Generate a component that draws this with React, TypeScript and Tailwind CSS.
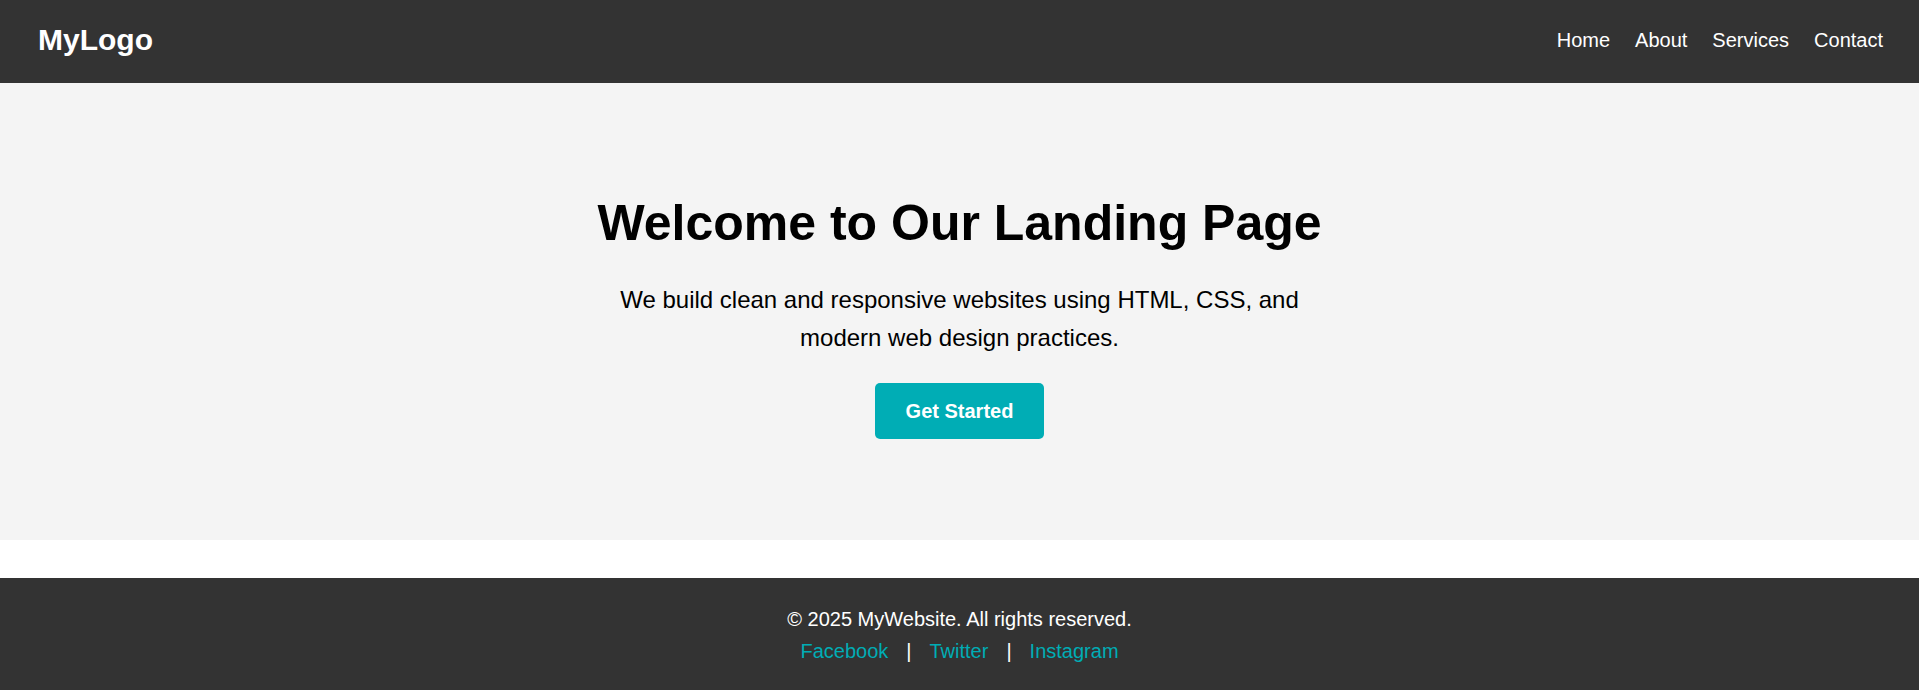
import React from "react";

const navLinks = ["Home", "About", "Services", "Contact"];
const socials = ["Facebook", "Twitter", "Instagram"];

const App = () => {
  return (
    <div className="min-h-screen bg-white font-['Liberation_Sans',Arial,sans-serif] text-[20px] leading-[1.6]">
      {/* Header */}
      <header className="bg-[#333333] h-[83px] flex items-center justify-between pl-[38px] pr-[36px] pb-[4px]">
        <div className="text-white text-[30px] font-bold leading-none">MyLogo</div>
        <nav className="flex items-center gap-[25px]">
          {navLinks.map((link) => (
            <a key={link} href="#" className="text-white text-[20px]">
              {link}
            </a>
          ))}
        </nav>
      </header>

      {/* Hero */}
      <section className="bg-[#f4f4f4] pt-[100px] pb-[101px] px-5 flex flex-col items-center text-center">
        <h1 className="text-[50px] font-bold text-black leading-[1.6]">
          Welcome to Our Landing Page
        </h1>
        <p className="mt-[18px] text-[24px] text-black max-w-[720px] leading-[1.6]">
          We build clean and responsive websites using HTML, CSS, and modern web design practices.
        </p>
        <a
          href="#"
          className="mt-[25px] bg-[#00adb5] text-white font-bold text-[20px] px-[31px] py-[12px] rounded-[5px]"
        >
          Get Started
        </a>
      </section>

      {/* Footer */}
      <footer className="mt-[38px] bg-[#333333] text-white text-center pt-[25px] pb-[25px]">
        <p>© 2025 MyWebsite. All rights reserved.</p>
        <div className="flex justify-center items-center gap-[18px]">
          {socials.map((s, i) => (
            <React.Fragment key={s}>
              {i > 0 && <span>|</span>}
              <a href="#" className="text-[#00adb5]">
                {s}
              </a>
            </React.Fragment>
          ))}
        </div>
      </footer>
    </div>
  );
};

export default App;
